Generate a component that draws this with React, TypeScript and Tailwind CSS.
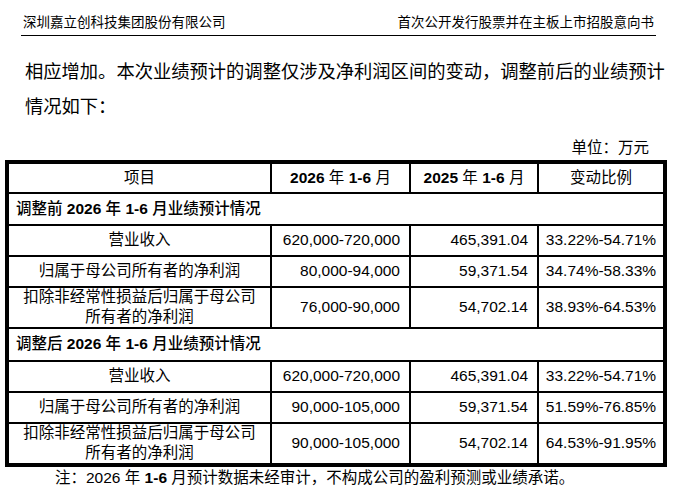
import React, { ReactNode } from 'react';

const font = 'font-["Liberation_Sans","Noto_Sans_CJK_SC",sans-serif]';

interface Row {
  label: ReactNode;
  current: string;
  previous: string;
  change: string;
}

const longLabel =
<>
    扣除非经常性损益后归属于母公司
    <br />
    所有者的净利润
  </>;


const before: Row[] = [
{ label: '营业收入', current: '620,000-720,000', previous: '465,391.04', change: '33.22%-54.71%' },
{ label: '归属于母公司所有者的净利润', current: '80,000-94,000', previous: '59,371.54', change: '34.74%-58.33%' },
{ label: longLabel, current: '76,000-90,000', previous: '54,702.14', change: '38.93%-64.53%' }];


const after: Row[] = [
{ label: '营业收入', current: '620,000-720,000', previous: '465,391.04', change: '33.22%-54.71%' },
{ label: '归属于母公司所有者的净利润', current: '90,000-105,000', previous: '59,371.54', change: '51.59%-76.85%' },
{ label: longLabel, current: '90,000-105,000', previous: '54,702.14', change: '64.53%-91.95%' }];


function Period({ year }: {year: string;}) {
  return (
    <span>
      <b className="font-bold">{year}</b> 年 <b className="font-bold">1-6</b> 月
    </span>);

}

function Section({ title }: {title: string;}) {
  return (
    <div className="col-span-4 flex items-center border-b-2 border-black pl-[7px] font-medium">
      <span>
        {title} <Period year="2026" />业绩预计情况
      </span>
    </div>);

}

function DataRows({ rows, last }: {rows: Row[];last?: boolean;}) {
  return (
    <>
      {rows.map((r, i) => {
        const bottom = last && i === rows.length - 1 ? '' : 'border-b-2';
        return (
          <React.Fragment key={i}>
            <div className={`flex items-center justify-center border-r-2 border-black text-center leading-[20px] ${bottom}`}>
              <span>{r.label}</span>
            </div>
            <div className={`flex items-center justify-end border-r-2 border-black pr-[9px] ${bottom}`}>
              {r.current}
            </div>
            <div className={`flex items-center justify-end border-r-2 border-black pr-[9px] ${bottom}`}>
              {r.previous}
            </div>
            <div className={`flex items-center justify-center border-black ${bottom}`}>
              {r.change}
            </div>
          </React.Fragment>);

      })}
    </>);

}

export default function App() {
  return (
    <div className={`w-[677px] h-[492px] bg-white text-black ${font} overflow-hidden`}>
      <div className="mx-[21px] flex justify-between border-b-[1.5px] border-black px-[2px] pt-[14px] pb-[3px] text-[13.5px] leading-[18px]">
        <span>深圳嘉立创科技集团股份有限公司</span>
        <span>首次公开发行股票并在主板上市招股意向书</span>
      </div>

      <p className="mt-[18px] ml-[25px] whitespace-nowrap text-[18.3px] leading-[35px]">
        相应增加。本次业绩预计的调整仅涉及净利润区间的变动，调整前后的业绩预计
        <br />
        情况如下：
      </p>

      <div className="mt-[14px] pr-[28px] text-right text-[15.5px] leading-[20px]">单位：万元</div>

      <div className="mt-[1.5px] ml-[5px] w-[662px] border-4 border-black text-[15.5px]">
        <div className="grid grid-cols-[263px_139px_128px_124px] grid-rows-[30px_32px_31px_31px_41px_33px_31px_31px_39px]">
          <div className="flex items-center justify-center border-r-2 border-b-2 border-black">项目</div>
          <div className="flex items-center justify-center border-r-2 border-b-2 border-black">
            <Period year="2026" />
          </div>
          <div className="flex items-center justify-center border-r-2 border-b-2 border-black">
            <Period year="2025" />
          </div>
          <div className="flex items-center justify-center border-b-2 border-black">变动比例</div>

          <Section title="调整前" />
          <DataRows rows={before} />
          <Section title="调整后" />
          <DataRows rows={after} last />
        </div>
      </div>

      <p className="mt-[1px] pl-[55px] text-[15.5px] leading-[20px]">
        注：2026 年 <b className="font-bold">1-6</b> 月预计数据未经审计，不构成公司的盈利预测或业绩承诺。
      </p>
    </div>);

}
